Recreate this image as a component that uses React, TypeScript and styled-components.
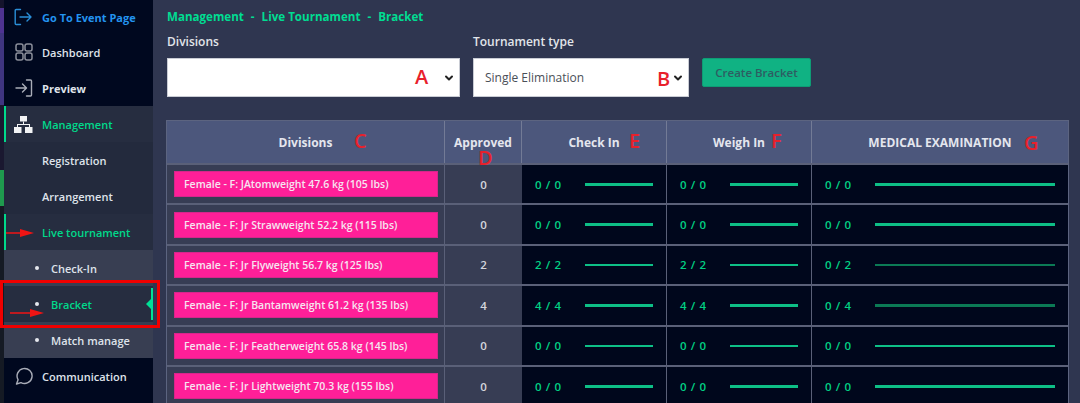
import React from "react";
import styled, { createGlobalStyle } from "styled-components";

const Global = createGlobalStyle`
  html, body { margin: 0; padding: 0; width: 1080px; height: 403px; overflow: hidden; background: #2f3650; }
  body { font-family: "Open Sans", "Noto Sans", sans-serif; }
  * { box-sizing: border-box; }
`;
const Page = styled.div`
  position: relative; display: flex; width: 1080px; height: 403px; overflow: hidden; background: #2f3650;
`;
const Strip = styled.div`
  flex: 0 0 4px;
  background: linear-gradient(#14142c 0 8px, #4e3391 8px 33px, #3f3580 33px 105px, #1a1830 105px 170px, #1f9a4e 170px 206px, #151a24 206px 100%);
`;
const Sidebar = styled.nav`
  flex: 0 0 149px; background: #00081f; display: flex; flex-direction: column;
`;
const NavRow = styled.div<{ $tone?: string; $active?: boolean; $first?: boolean; $sub?: boolean }>`
  position: relative; height: ${p => (p.$first ? 34 : 36)}px; flex: 0 0 ${p => (p.$first ? 34 : 36)}px;
  display: flex; align-items: center; gap: ${p => (p.$sub ? 0 : 9)}px;
  padding-left: ${p => (p.$sub ? 0 : p.$active ? 8 : 10)}px;
  background: ${p => p.$tone ?? "transparent"};
  border-left: ${p => (p.$active ? "2px solid #00d98b" : "0")};
`;
const IconSlot = styled.span`
  width: 19px; height: 19px; display: flex; align-items: center; justify-content: center; flex: 0 0 19px; color: #a9adb8;
`;
const NavLabel = styled.span<{ $color?: string; $weight?: number; $indent?: number }>`
  font-size: 11px; font-weight: ${p => p.$weight ?? 600}; color: ${p => p.$color ?? "#dfe3ea"};
  margin-left: ${p => p.$indent ?? 0}px; white-space: nowrap; line-height: 1;
`;
const Dot = styled.i`
  width: 4px; height: 4px; border-radius: 50%; background: #e6e8ee; margin-left: 31px; margin-right: 12px; flex: 0 0 4px;
`;
const Marker = styled.span`
  position: absolute; right: 0; top: 2px; bottom: 2px; width: 2px; background: #00e096;
  &::before {
    content: ""; position: absolute; right: 2px; top: 11px; border: 5px solid transparent; border-left: 0; border-right-color: #00e096;
  }
`;
const Main = styled.main`
  flex: 1; min-width: 0; padding: 10px 10px 0 14px; display: flex; flex-direction: column;
`;
const Crumb = styled.div`
  flex: 0 0 14px; font-size: 11.6px; font-weight: 700; color: #00dd92; line-height: 14px; display: flex; gap: 4px; white-space: pre;
`;
const Filters = styled.div`
  flex: 0 0 85px; display: flex; align-items: flex-start; margin-top: 11px;
`;
const Field = styled.div<{ $w: number }>`
  position: relative; width: ${p => p.$w}px; margin-right: 13px; display: flex; flex-direction: column; gap: 9px;
`;
const FieldLabel = styled.label`
  font-size: 12px; font-weight: 600; color: #e2e5ea; line-height: 14px;
`;
const SelectBox = styled.div`
  height: 39px; background: #fff; border: 1px solid #c9ccd4; display: flex; align-items: center; justify-content: space-between;
  padding: 0 4px 0 11px; font-size: 12px; color: #4a4f58;
`;
const CreateButton = styled.button`
  width: 109px; height: 29px; margin-top: 23px; background: #10b283; border: 1px solid #0e9c75; border-radius: 2px;
  font: 600 11.5px "Open Sans", sans-serif; color: #2e5d62; padding: 0;
`;
const Table = styled.div`
  flex: 0 0 auto; width: 903px; margin-left: -1px; border: 1px solid #5c6480; border-bottom: 0;
`;
const Row = styled.div<{ $h: number }>`
  display: grid; grid-template-columns: 278px 77px 145px 145px 1fr; height: ${p => p.$h}px; border-bottom: 2px solid #5a6078;
`;
const HeadCell = styled.div<{ $last?: boolean }>`
  display: flex; align-items: center; justify-content: center; background: #4c577c;
  border-right: ${p => (p.$last ? "0" : "1px solid #737b96")};
  font-size: 12px; font-weight: 700; color: #e4e6ee; white-space: nowrap;
`;
const NameCell = styled.div`
  display: flex; align-items: center; padding-left: 7px; background: #373d54; border-right: 1px solid #5a6078;
`;
const Pill = styled.div`
  width: 264px; height: 26px; background: #ff1f98; border: 1px solid #d8268b; display: flex; align-items: center; padding-left: 9px;
  font-size: 10.5px; font-weight: 600; color: #f6e6f1; white-space: nowrap;
`;
const NumCell = styled.div`
  display: flex; align-items: center; justify-content: center; background: #373d54; font-size: 11.5px; font-weight: 600; color: #d4d6dc;
`;
const ProgCell = styled.div<{ $last?: boolean }>`
  display: flex; align-items: center; background: #00071c; padding: 0 13px;
  border-right: ${p => (p.$last ? "0" : "1px solid #5a6078")};
`;
const Ratio = styled.span`
  flex: 0 0 50px; font-size: 11.5px; font-weight: 600; color: #00d084; letter-spacing: 0.6px; white-space: nowrap;
`;
const Track = styled.span<{ $h: number; $color: string }>`
  flex: 1; height: ${p => p.$h}px; background: ${p => p.$color}; display: block;
`;
const Tag = styled.span`
  position: absolute; color: #e8212b; font-weight: 600; font-size: 20px; line-height: 1; font-family: "Open Sans", sans-serif;
`;
const RedBox = styled.div`
  position: absolute; left: 0; top: 280px; width: 160px; height: 48px; border: 3px solid #f00000; pointer-events: none;
`;
const ArrowMark = styled.svg`
  position: absolute; pointer-events: none;
`;

const Chevron = () => (
  <svg width="12" height="12" viewBox="0 0 12 12" fill="none" stroke="#222" strokeWidth="2" strokeLinecap="round" strokeLinejoin="round"><path d="M3 4.5 6 7.5 9 4.5" /></svg>
);
const Arrow = ({ x, y, w }: { x: number; y: number; w: number }) => (
  <ArrowMark style={{ left: x, top: y }} width={w} height="10" viewBox={`0 0 ${w} 10`}>
    <path d={`M0 4.2H${w - 14}V1L${w} 5 ${w - 14} 9V5.8H0Z`} fill="#f01414" />
  </ArrowMark>
);

const IEnter = () => (
  <svg width="19" height="18" viewBox="0 0 19 18" fill="none" stroke="#2a8fd8" strokeWidth="1.4" strokeLinecap="round" strokeLinejoin="round"><path d="M6.5 1.5H2.2a1 1 0 0 0-1 1v13a1 1 0 0 0 1 1h4.3M6 9h11M13 5l4 4-4 4" /></svg>
);
const IGrid = () => (
  <svg width="18" height="18" viewBox="0 0 18 18" fill="none" stroke="#8b8f9b" strokeWidth="1.5"><rect x="1" y="1" width="7" height="7" rx="2" /><rect x="10" y="1" width="7" height="7" rx="2" /><rect x="1" y="10" width="7" height="7" rx="2" /><rect x="10" y="10" width="7" height="7" rx="2" /></svg>
);
const ILogin = () => (
  <svg width="18" height="18" viewBox="0 0 18 18" fill="none" stroke="#a9adb8" strokeWidth="1.4" strokeLinecap="round" strokeLinejoin="round"><path d="M11.5 1h4a1 1 0 0 1 1 1v14a1 1 0 0 1-1 1h-4M1 9h10M7.5 5l4 4-4 4" /></svg>
);
const IOrg = () => (
  <svg width="19" height="17" viewBox="0 0 19 17" fill="#f2f3f5"><rect x="6" y="0" width="7" height="5.5" /><rect x="0" y="11" width="7.5" height="6" /><rect x="11" y="11" width="7.5" height="6" /><path d="M9 5.5h1v2.5h6V11h-1V9H4v2H3V8h6z" /></svg>
);
const IChat = () => (
  <svg width="18" height="18" viewBox="0 0 18 18" fill="none" stroke="#a9adb8" strokeWidth="1.4" strokeLinejoin="round"><path d="M1.5 17l1.6-4.2A7.5 7.5 0 1 1 6 15.6z" /></svg>
);

const navGreen = "#00d98b";
const rows = [
  { name: "Female - F: JAtomweight 47.6 kg (105 lbs)", a: "0", c: "0 / 0", w: "0 / 0", m: "0 / 0", h: 3, mc: "#0dbf86" },
  { name: "Female - F: Jr Strawweight 52.2 kg (115 lbs)", a: "0", c: "0 / 0", w: "0 / 0", m: "0 / 0", h: 3, mc: "#0dbf86" },
  { name: "Female - F: Jr Flyweight 56.7 kg (125 lbs)", a: "2", c: "2 / 2", w: "2 / 2", m: "0 / 2", h: 2, mc: "#0b7a55" },
  { name: "Female - F: Jr Bantamweight 61.2 kg (135 lbs)", a: "4", c: "4 / 4", w: "4 / 4", m: "0 / 4", h: 3, mc: "#0b7a55" },
  { name: "Female - F: Jr Featherweight 65.8 kg (145 lbs)", a: "0", c: "0 / 0", w: "0 / 0", m: "0 / 0", h: 2, mc: "#0dbf86" },
  { name: "Female - F: Jr Lightweight 70.3 kg (155 lbs)", a: "0", c: "0 / 0", w: "0 / 0", m: "0 / 0", h: 3, mc: "#0dbf86" },
];

export default function App() {
  return (
    <Page>
      <Global />
      <Strip />
      <Sidebar>
        <NavRow $first><IconSlot><IEnter /></IconSlot><NavLabel $color="#2394f0" $weight={700}>Go To Event Page</NavLabel></NavRow>
        <NavRow><IconSlot><IGrid /></IconSlot><NavLabel>Dashboard</NavLabel></NavRow>
        <NavRow><IconSlot><ILogin /></IconSlot><NavLabel $weight={700}>Preview</NavLabel></NavRow>
        <NavRow $tone="#262d40" $active><IconSlot><IOrg /></IconSlot><NavLabel $color={navGreen}>Management</NavLabel></NavRow>
        <NavRow $tone="#232a3d"><NavLabel $indent={28}>Registration</NavLabel></NavRow>
        <NavRow $tone="#232a3d"><NavLabel $indent={28}>Arrangement</NavLabel></NavRow>
        <NavRow $tone="#262d40" $active><NavLabel $indent={28} $color={navGreen}>Live tournament</NavLabel></NavRow>
        <NavRow $tone="#383e52" $sub><Dot /><NavLabel>Check-In</NavLabel></NavRow>
        <NavRow $tone="#262d40" $sub><Dot /><NavLabel $color={navGreen}>Bracket</NavLabel><Marker /></NavRow>
        <NavRow $tone="#383e52" $sub><Dot /><NavLabel>Match manage</NavLabel></NavRow>
        <NavRow><IconSlot><IChat /></IconSlot><NavLabel>Communication</NavLabel></NavRow>
      </Sidebar>
      <Main>
        <Crumb><span>Management</span><span> - </span><span>Live Tournament</span><span> - </span><span>Bracket</span></Crumb>
        <Filters>
          <Field $w={293}>
            <FieldLabel>Divisions</FieldLabel>
            <SelectBox><span /><Chevron /></SelectBox>
          </Field>
          <Field $w={216}>
            <FieldLabel>Tournament type</FieldLabel>
            <SelectBox><span>Single Elimination</span><Chevron /></SelectBox>
          </Field>
          <CreateButton>Create Bracket</CreateButton>
        </Filters>
        <Table>
          <Row $h={44}>
            <HeadCell>Divisions</HeadCell>
            <HeadCell>Approved</HeadCell>
            <HeadCell>Check In</HeadCell>
            <HeadCell>Weigh In</HeadCell>
            <HeadCell $last>MEDICAL EXAMINATION</HeadCell>
          </Row>
          {rows.map(r => (
            <Row $h={40.4} key={r.name}>
              <NameCell><Pill>{r.name}</Pill></NameCell>
              <NumCell>{r.a}</NumCell>
              <ProgCell><Ratio>{r.c}</Ratio><Track $h={r.h} $color="#0dbf86" /></ProgCell>
              <ProgCell><Ratio>{r.w}</Ratio><Track $h={r.h} $color="#0dbf86" /></ProgCell>
              <ProgCell $last><Ratio>{r.m}</Ratio><Track $h={r.h} $color={r.mc} /></ProgCell>
            </Row>
          ))}
        </Table>
      </Main>
      <RedBox />
      <Arrow x={6} y={228} w={28} />
      <Arrow x={10} y={308} w={34} />
      <Tag style={{ left: 415, top: 67 }}>A</Tag>
      <Tag style={{ left: 657, top: 69 }}>B</Tag>
      <Tag style={{ left: 354, top: 131 }}>C</Tag>
      <Tag style={{ left: 478, top: 148 }}>D</Tag>
      <Tag style={{ left: 629, top: 131 }}>E</Tag>
      <Tag style={{ left: 771, top: 131 }}>F</Tag>
      <Tag style={{ left: 1024, top: 133 }}>G</Tag>
    </Page>
  );
}
